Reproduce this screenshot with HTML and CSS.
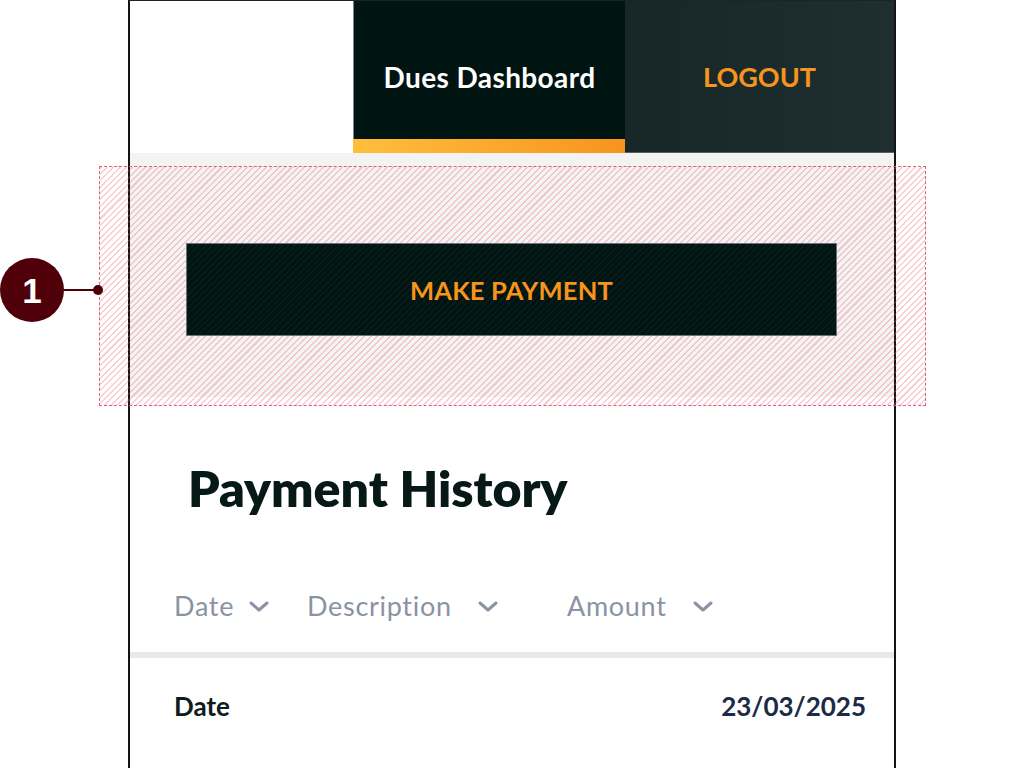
FILE: index.html
```html
<!DOCTYPE html>
<html lang="en">
<head>
<meta charset="utf-8">
<title>Dues Dashboard</title>
<link rel="stylesheet" href="styles.css">
</head>
<body>
<div class="frame">
  <nav class="nav">
    <div class="nav-blank"></div>
    <a class="nav-tab active">Dues Dashboard</a>
    <a class="nav-tab logout">LOGOUT</a>
  </nav>
  <section class="pay-area">
    <button class="pay-btn">MAKE PAYMENT</button>
  </section>
  <h1 class="title">Payment History</h1>
  <div class="thead">
    <div class="th th-date"><span>Date</span><svg class="chev" viewBox="0 0 20 11"><path d="M2 2 L10 9 L18 2"/></svg></div>
    <div class="th th-desc"><span>Description</span><svg class="chev" viewBox="0 0 20 11"><path d="M2 2 L10 9 L18 2"/></svg></div>
    <div class="th th-amt"><span>Amount</span><svg class="chev" viewBox="0 0 20 11"><path d="M2 2 L10 9 L18 2"/></svg></div>
  </div>
  <div class="row">
    <span class="row-label">Date</span>
    <span class="row-value">23/03/2025</span>
  </div>
</div>

<div class="highlight"></div>
<div class="marker">
  <span class="marker-num">1</span>
  <span class="marker-line"></span>
  <span class="marker-dot"></span>
</div>
</body>
</html>
```

FILE: styles.css
```css
* { box-sizing: border-box; }
html, body {
  margin: 0;
  padding: 0;
  background: #ffffff;
  overflow: hidden;
  height: 768px;
}
body {
  font-family: "Lato", "Noto Sans", sans-serif;
  position: relative;
}
.frame {
  margin-left: 128px;
  width: 768px;
  height: 768px;
  border-left: 2px solid #141414;
  border-right: 2px solid #141414;
  border-top: 1px solid #222;
  background: #fff;
}
.nav {
  display: flex;
  height: 152px;
}
.nav-blank {
  width: 223px;
  background: #fff;
}
.nav-tab {
  display: flex;
  align-items: center;
  justify-content: center;
  font-weight: 700;
  font-size: 27px;
  text-decoration: none;
}
.nav-tab.active {
  width: 272px;
  background: #001412;
  color: #ffffff;
  font-size: 28px;
  letter-spacing: 0.4px;
  border-left: 1px solid #7a8584;
  margin-bottom: 14px;
  padding-top: 14px;
  position: relative;
}
.nav-tab.active::after {
  content: "";
  position: absolute;
  left: -1px;
  right: 0;
  bottom: -14px;
  height: 14px;
  background: linear-gradient(90deg, #ffbe3b, #f7941d);
}
.nav-tab.logout {
  flex: 1;
  background: linear-gradient(90deg, #172727, #1f2f2f);
  color: #f7941d;
  border-bottom: 1px solid #56605f;
  padding-bottom: 1px;
}
.pay-area {
  background: #f3f3f3;
  padding: 90px 57px 61px 56px;
}
.pay-btn {
  position: relative;
  z-index: 2;
  display: block;
  width: 100%;
  height: 93px;
  background-color: #001412;
  background-image: repeating-linear-gradient(135deg, rgba(255, 255, 255, 0.035) 0 1.5px, transparent 1.5px 4.5px);
  border: 1px solid #6d7676;
  color: #f7941d;
  font-family: "Lato", "Noto Sans", sans-serif;
  font-weight: 700;
  font-size: 25.5px;
  letter-spacing: 0.2px;
  cursor: pointer;
}
.title {
  margin: 61px 0 0 58px;
  font-size: 50px;
  line-height: 60px;
  font-weight: 800;
  color: #061916;
}
.thead {
  display: grid;
  grid-template-columns: 133px 260px 1fr;
  margin: 72px 0 0 0;
  padding: 0 0 30px 44px;
  border-bottom: 6px solid #e9e9e9;
}
.th {
  display: flex;
  align-items: center;
  font-size: 27px;
  letter-spacing: 0.7px;
  line-height: 32px;
  color: #8a93a3;
}
.th-date .chev { margin-left: 15px; }
.th-desc .chev, .th-amt .chev { margin-left: 26px; }
.chev {
  width: 20px;
  height: 11px;
  fill: none;
  stroke: #8a93a3;
  stroke-width: 3;
  stroke-linecap: round;
  stroke-linejoin: round;
}
.row {
  display: flex;
  justify-content: space-between;
  padding: 32px 28px 0 44px;
  font-size: 26px;
  line-height: 32px;
  font-weight: 700;
}
.row-label { color: #0d1c1a; }
.row-value { color: #1b2b45; }

.highlight {
  position: absolute;
  z-index: 1;
  left: 99px;
  top: 166px;
  width: 827px;
  height: 240px;
  border: 1px dashed #e0607c;
  background: repeating-linear-gradient(135deg, rgba(235, 90, 110, 0.3) 0 1.5px, transparent 1.5px 4.5px);
}
.marker {
  position: absolute;
  z-index: 3;
  left: 0;
  top: 258px;
  height: 64px;
  display: flex;
  align-items: center;
}
.marker-num {
  width: 64px;
  height: 64px;
  border-radius: 50%;
  background: #4f0008;
  color: #fff;
  font-family: "Liberation Sans", Arial, sans-serif;
  font-weight: 700;
  font-size: 35px;
  line-height: 1;
  display: flex;
  align-items: center;
  justify-content: center;
}
.marker-line {
  width: 32px;
  height: 2px;
  background: #4f0008;
}
.marker-dot {
  width: 10px;
  height: 10px;
  border-radius: 50%;
  background: #4f0008;
  margin-left: -3px;
}
```
